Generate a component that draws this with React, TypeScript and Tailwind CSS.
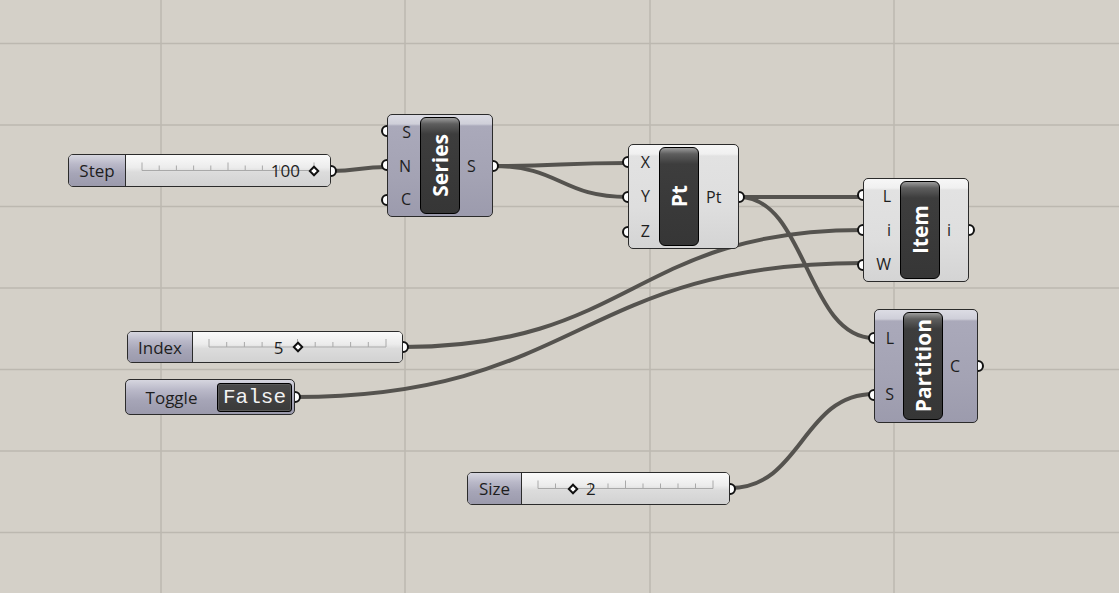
import React from "react";

type Wire = [number, number, number, number];

// output port -> input port, canvas coordinates
const wires: Wire[] = [
  [331, 171, 387, 167],
  [493, 166, 628, 163],
  [493, 166, 628, 197],
  [739, 197, 863, 197],
  [739, 197, 874, 338],
  [403, 347, 863, 230],
  [295, 397, 863, 263],
  [730, 488, 874, 394],
];

function wirePath([x1, y1, x2, y2]: Wire) {
  const d = Math.max(Math.abs(x2 - x1) * 0.5, 24);
  return `M${x1} ${y1} C${x1 + d} ${y1} ${x2 - d} ${y2} ${x2} ${y2}`;
}

const gridX = [161, 405, 650, 894];
const gridY = [43.5, 125, 206.5, 288, 369.5, 451, 532.5];

const purple =
  "bg-[linear-gradient(to_bottom,#dcdce4_0px,#cfcfd9_9px,#aaa9ba_11px,#a4a3b4_60%,#9c9bad_100%)]";
const light =
  "bg-[linear-gradient(to_bottom,#f7f7f7_0px,#f0f0f0_9px,#e2e2e2_11px,#dedede_60%,#d4d4d4_100%)]";

function PortDot() {
  return <div className="w-[12px] h-[12px] rounded-full bg-white border-[2.5px] border-[#111]" />;
}

function Capsule({ name }: { name: string }) {
  return (
    <div className="w-[40px] my-[2px] rounded-[6px] border-[1.5px] border-black bg-[linear-gradient(to_bottom,#9c9c9c_0px,#5e5e5e_6px,#3d3d3d_16px,#363636_100%)] flex items-center justify-center">
      <span className="[writing-mode:vertical-rl] rotate-180 text-white font-bold text-[21px] leading-none font-['Open_Sans',sans-serif]">
        {name}
      </span>
    </div>
  );
}

function Component({
  pos,
  name,
  inputs,
  outputs,
  isLight,
  leftW,
}: {
  pos: string;
  name: string;
  inputs: string[];
  outputs: string[];
  isLight?: boolean;
  leftW: string;
}) {
  return (
    <div className={`absolute flex ${pos}`}>
      <div className="flex flex-col w-[12px] -mr-[6px]">
        {inputs.map((l) => (
          <div key={l} className="flex-1 flex items-center">
            <PortDot />
          </div>
        ))}
      </div>
      <div
        className={`relative z-10 flex flex-1 rounded-[5px] border-[1.5px] border-[#2b2b2b] ${isLight ? light : purple}`}
      >
        <div className={`flex flex-col ${leftW}`}>
          {inputs.map((l) => (
            <div key={l} className="flex-1 flex items-center justify-end pr-[9px] text-[16px] leading-none text-[#1e1e1e]">
              {l}
            </div>
          ))}
        </div>
        <Capsule name={name} />
        <div className="flex flex-col flex-1">
          {outputs.map((l) => (
            <div key={l} className="flex-1 flex items-center pl-[7px] text-[16px] leading-none text-[#1e1e1e]">
              {l}
            </div>
          ))}
        </div>
      </div>
      <div className="flex flex-col w-[12px] -ml-[6px]">
        {outputs.map((l) => (
          <div key={l} className="flex-1 flex items-center">
            <PortDot />
          </div>
        ))}
      </div>
    </div>
  );
}

function Slider({
  pos,
  label,
  labelW,
  value,
  frac,
  textLeft,
}: {
  pos: string;
  label: string;
  labelW: string;
  value: string;
  frac: number;
  textLeft: boolean;
}) {
  const ticks = Array.from({ length: 11 }, (_, i) => i);
  return (
    <div className={`absolute flex items-center ${pos}`}>
      <div className="relative z-10 flex h-full flex-1 rounded-[5px] border-[1.5px] border-[#2b2b2b] overflow-hidden">
        <div
          className={`${labelW} flex items-center justify-center border-r-[1.5px] border-[#2b2b2b] text-[17px] leading-none text-[#1e1e1e] bg-[linear-gradient(to_bottom,#d6d6df_0%,#b9b8c8_30%,#a6a5b7_60%,#9b9aac_100%)]`}
        >
          {label}
        </div>
        <div className="flex-1 flex px-[16px] bg-[linear-gradient(to_bottom,#fafafa_0%,#ececec_40%,#dcdcdc_55%,#d2d2d2_100%)]">
          <div className="relative w-full h-full">
            <svg className="absolute inset-0 w-full h-full overflow-visible">
              <line x1="0%" x2="100%" y1="50%" y2="50%" stroke="#a9a9a9" strokeWidth="1" />
              {ticks.map((i) => (
                <rect
                  key={i}
                  x={`${i * 10}%`}
                  y="50%"
                  width="1"
                  height={i % 5 === 0 ? 8 : 5}
                  fill="#a9a9a9"
                  transform={`translate(-0.5 ${i % 5 === 0 ? -8 : -5})`}
                />
              ))}
            </svg>
            <div
              className="absolute top-0 bottom-0 w-0 flex items-center justify-center"
              style={{ left: `${frac * 100}%` }}
            >
              <div className="relative flex items-center justify-center">
                <div className="w-[8px] h-[8px] rotate-45 border-2 border-[#111] bg-white" />
                <span
                  className={`absolute text-[17px] leading-none text-[#1e1e1e] whitespace-nowrap ${textLeft ? "right-[18px]" : "left-[17px]"}`}
                >
                  {value}
                </span>
              </div>
            </div>
          </div>
        </div>
      </div>
      <div className="-ml-[6px]">
        <PortDot />
      </div>
    </div>
  );
}

function Toggle() {
  return (
    <div className="absolute flex items-center left-[125px] top-[379px] h-[36px] w-[176px]">
      <div className="relative z-10 flex h-full flex-1 rounded-[5px] border-[1.5px] border-[#2b2b2b] bg-[linear-gradient(to_bottom,#d6d6df_0%,#b9b8c8_30%,#a6a5b7_60%,#9b9aac_100%)]">
        <div className="flex-1 flex items-center justify-center text-[17px] leading-none text-[#1e1e1e]">
          Toggle
        </div>
        <div className="w-[75px] my-[2.5px] mr-[2px] rounded-[3px] border border-black bg-[linear-gradient(to_bottom,#4a4a4a,#3a3a3a)] flex items-center justify-center shadow-[inset_0_0_0_1px_#5a5a5a]">
          <span className="font-['Liberation_Mono',monospace] text-[21px] leading-none text-[#f2f2f2]">False</span>
        </div>
      </div>
      <div className="-ml-[6px]">
        <PortDot />
      </div>
    </div>
  );
}

export default function App() {
  return (
    <div className="relative w-[1119px] h-[593px] overflow-hidden bg-[#d4d0c8] font-['Open_Sans',sans-serif]">
      <svg className="absolute inset-0" width="1119" height="593">
        {gridX.map((x) => (
          <line key={`x${x}`} x1={x} x2={x} y1={0} y2={593} stroke="#bcb8b0" strokeWidth="1.5" />
        ))}
        {gridY.map((y) => (
          <line key={`y${y}`} x1={0} x2={1119} y1={y} y2={y} stroke="#bcb8b0" strokeWidth="1.5" />
        ))}
        {wires.map((w, i) => (
          <path key={i} d={wirePath(w)} fill="none" stroke="#55534f" strokeWidth="4" />
        ))}
      </svg>

      <Slider pos="left-[68px] top-[154px] h-[33px] w-[269px]" label="Step" labelW="w-[57px]" value="100" frac={1} textLeft />
      <Slider pos="left-[127px] top-[331px] h-[32px] w-[282px]" label="Index" labelW="w-[65px]" value="5" frac={0.5} textLeft />
      <Slider pos="left-[467px] top-[472px] h-[33px] w-[269px]" label="Size" labelW="w-[54px]" value="2" frac={0.2} textLeft={false} />
      <Toggle />

      <Component pos="left-[381px] top-[114px] w-[118px] h-[103px]" name="Series" inputs={["S", "N", "C"]} outputs={["S"]} leftW="w-[32px]" />
      <Component pos="left-[622px] top-[144px] w-[123px] h-[105px]" name="Pt" inputs={["X", "Y", "Z"]} outputs={["Pt"]} leftW="w-[30px]" isLight />
      <Component pos="left-[857px] top-[178px] w-[118px] h-[104px]" name="Item" inputs={["L", "i", "W"]} outputs={["i"]} leftW="w-[36px]" isLight />
      <Component pos="left-[868px] top-[309px] w-[116px] h-[114px]" name="Partition" inputs={["L", "S"]} outputs={["C"]} leftW="w-[28px]" />
    </div>
  );
}
